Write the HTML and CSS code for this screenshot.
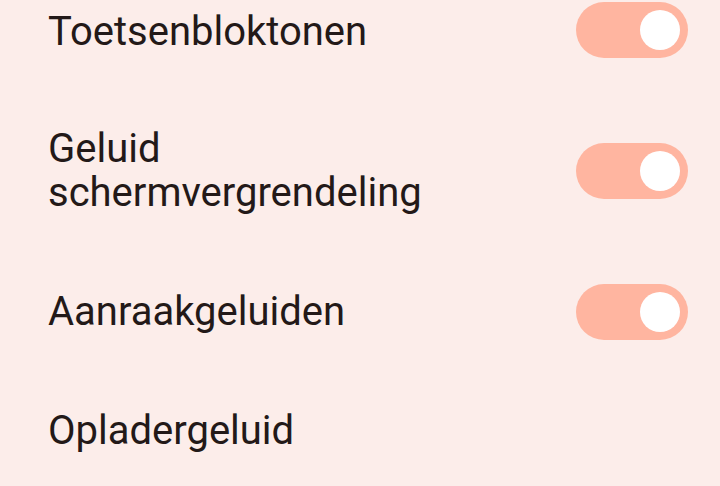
FILE: index.html
```html
<!DOCTYPE html>
<html>
  <head>
    <title>Geluid</title>
    <meta name="viewport" content="width=device-width,initial-scale=1">
    <link rel="stylesheet" href="styles.css">
  </head>
  <body>
    <div class="list">
      <div class="item">
        <div class="label">Toetsenbloktonen</div>
        <label class="switch"><input type="checkbox" checked><span class="knob"></span></label>
      </div>
      <div class="item">
        <div class="label">Geluid schermvergrendeling</div>
        <label class="switch"><input type="checkbox" checked><span class="knob"></span></label>
      </div>
      <div class="item">
        <div class="label">Aanraakgeluiden</div>
        <label class="switch"><input type="checkbox" checked><span class="knob"></span></label>
      </div>
      <div class="item">
        <div class="label">Opladergeluid</div>
      </div>
    </div>
  </body>
</html>
```

FILE: styles.css
```css
* {
  box-sizing: border-box;
  margin: 0;
  padding: 0;
}

body {
  background-color: #fcedea;
  font-family: Roboto, "Noto Sans", sans-serif;
  color: #231918;
  overflow: hidden;
}

.list {
  margin-top: -33px; /* scrolled */
}

.item {
  display: flex;
  align-items: center;
  gap: 64px;
  padding: 35px 32px 34px 48px;
}

.label {
  flex: 1;
  font-size: 40px;
  line-height: 44px;
}

.item:first-child .label {
  padding-top: 4px;
}

.switch {
  position: relative;
  width: 112px;
  height: 56px;
  border-radius: 28px;
  background-color: #ffb5a0;
  flex-shrink: 0;
}

.switch input {
  display: none;
}

.knob {
  position: absolute;
  top: 8px;
  right: 8px;
  width: 40px;
  height: 40px;
  border-radius: 50%;
  background-color: #fff;
}
```
